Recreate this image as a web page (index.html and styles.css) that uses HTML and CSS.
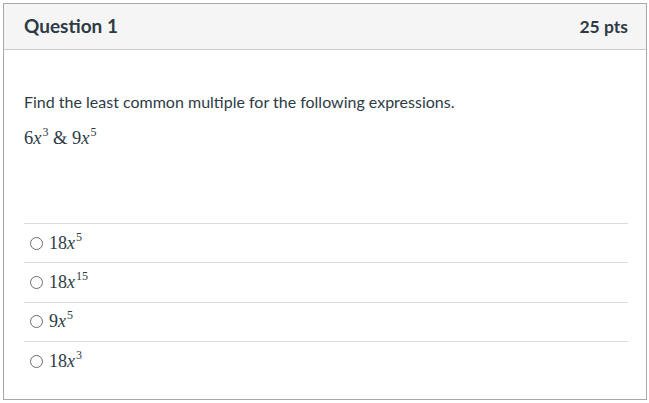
FILE: index.html
```html
<!DOCTYPE html>
<html>
<head>
<meta charset="utf-8">
<link rel="stylesheet" href="styles.css">
</head>
<body>
<div class="question">
  <div class="q-header">
    <span class="q-title">Question 1</span>
    <span class="q-pts">25 pts</span>
  </div>
  <div class="q-body">
    <p class="q-text">Find the least common multiple for the following expressions.</p>
    <p class="math">6<i>x</i><sup>3</sup> &amp; 9<i>x</i><sup>5</sup></p>
    <div class="answers">
      <label class="answer"><span class="radio"></span><span class="math-ans">18<i>x</i><sup>5</sup></span></label>
      <label class="answer"><span class="radio"></span><span class="math-ans">18<i>x</i><sup>15</sup></span></label>
      <label class="answer"><span class="radio"></span><span class="math-ans">9<i>x</i><sup>5</sup></span></label>
      <label class="answer"><span class="radio"></span><span class="math-ans">18<i>x</i><sup>3</sup></span></label>
    </div>
  </div>
</div>
</body>
</html>
```
FILE: styles.css
```css
html, body { margin: 0; padding: 0; background: #fff; }
body { padding: 3px; font-family: Lato, "Liberation Sans", sans-serif; color: #2d3b45; }
.question {
  border: 1px solid #a8a8a8;
  height: 397px;
  box-sizing: border-box;
  width: 644px;
}
.q-header {
  height: 45px;
  background: #f5f5f5;
  border-bottom: 1px solid #c7cdd1;
  display: flex;
  align-items: center;
  justify-content: space-between;
  padding: 0 18px 0 20px;
}
.q-title { font-weight: bold; font-size: 19px; color: #2d3b45; margin-top: -2px; }
.q-pts { font-weight: bold; font-size: 17.5px; color: #2d3b45; margin-top: -1px; }
.q-body { padding: 0 18px 0 20px; }
.q-text { margin: 40px 0 0; font-size: 16px; line-height: 24px; }
.math {
  margin: 12px 0 0;
  font-family: "Liberation Serif", serif;
  font-size: 18.5px;
  line-height: 24px;
  color: #2d3b45;
}
.math i, .math-ans i { font-style: italic; }
sup { font-size: 12px; vertical-align: 8px; line-height: 0; margin-left: 1px; }
.answers { margin-top: 73px; }
.answer {
  display: flex;
  align-items: center;
  height: 38.4px;
  border-top: 1px solid #dcdcdc;
  padding-left: 5px;
}
.radio {
  border: 1px solid #6b6b6b;
  border-radius: 50%;
  margin-right: 6px;
  margin-left: 1px;
  box-sizing: border-box;
  width: 13px; height: 13px;
}
.math-ans {
  font-family: "Liberation Serif", serif;
  font-size: 18px;
  color: #2d3b45;
}
```
